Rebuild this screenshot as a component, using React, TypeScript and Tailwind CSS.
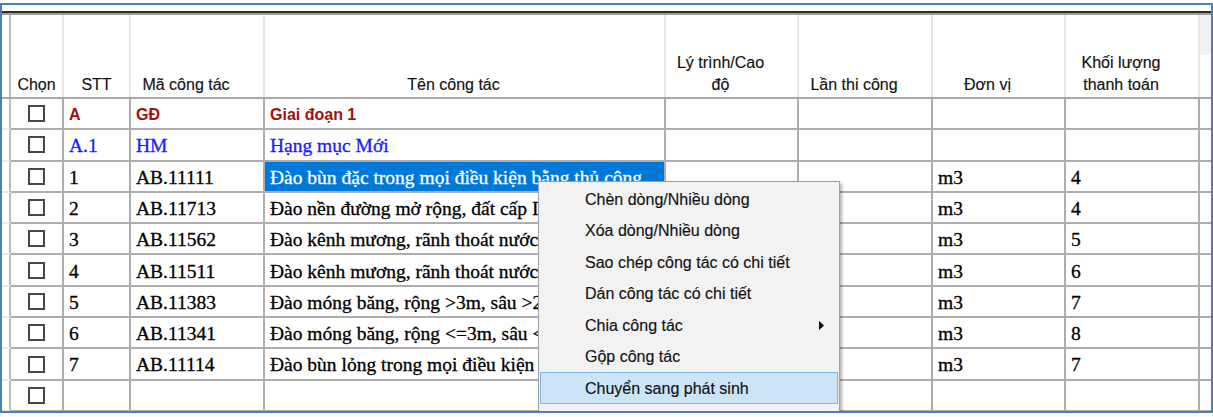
import React from "react";

const COLS =
  "grid grid-cols-[9px_53px_67px_134px_401px_133px_134px_133px_134px_11px]";

type Row = {
  kind: "red" | "blue" | "normal" | "empty";
  stt?: string;
  ma?: string;
  ten?: string;
  dv?: string;
  kl?: string;
  selected?: boolean;
};

const rows: Row[] = [
  { kind: "red", stt: "A", ma: "GĐ", ten: "Giai đoạn 1" },
  { kind: "blue", stt: "A.1", ma: "HM", ten: "Hạng mục Mới" },
  {
    kind: "normal",
    stt: "1",
    ma: "AB.11111",
    ten: "Đào bùn đặc trong mọi điều kiện bằng thủ công",
    dv: "m3",
    kl: "4",
    selected: true,
  },
  { kind: "normal", stt: "2", ma: "AB.11713", ten: "Đào nền đường mở rộng, đất cấp I", dv: "m3", kl: "4" },
  { kind: "normal", stt: "3", ma: "AB.11562", ten: "Đào kênh mương, rãnh thoát nước, rộng <=6m, đất cấp I", dv: "m3", kl: "5" },
  { kind: "normal", stt: "4", ma: "AB.11511", ten: "Đào kênh mương, rãnh thoát nước, rộng <=3m, đất cấp I", dv: "m3", kl: "6" },
  { kind: "normal", stt: "5", ma: "AB.11383", ten: "Đào móng băng, rộng >3m, sâu >2m, đất cấp I", dv: "m3", kl: "7" },
  { kind: "normal", stt: "6", ma: "AB.11341", ten: "Đào móng băng, rộng <=3m, sâu <=2m, đất cấp I", dv: "m3", kl: "8" },
  { kind: "normal", stt: "7", ma: "AB.11114", ten: "Đào bùn lỏng trong mọi điều kiện", dv: "m3", kl: "7" },
  { kind: "empty" },
];

const menuItems = [
  { label: "Chèn dòng/Nhiều dòng" },
  { label: "Xóa dòng/Nhiều dòng" },
  { label: "Sao chép công tác có chi tiết" },
  { label: "Dán công tác có chi tiết" },
  { label: "Chia công tác", sub: true },
  { label: "Gộp công tác" },
  { label: "Chuyển sang phát sinh", hl: true },
];

function HeadCell({
  children,
  offset,
}: {
  children?: React.ReactNode;
  offset?: boolean;
}) {
  return (
    <div
      className={`flex items-end justify-center border-r-2 border-[#e6e6e6] pb-[1px] text-center text-[16px] leading-[22px] text-[#111] [-webkit-text-stroke:0.15px] ${
        offset ? "pr-[22px]" : ""
      }`}
    >
      <div>{children}</div>
    </div>
  );
}

function Checkbox() {
  return <div className="h-[17px] w-[17px] border-2 border-[#474747] bg-white" />;
}

function Cell({
  children,
  className = "",
}: {
  children?: React.ReactNode;
  className?: string;
}) {
  return (
    <div
      className={`flex items-center overflow-hidden whitespace-nowrap border-b-2 border-r-2 border-[#adadad] pl-[5px] pt-[2px] ${className}`}
    >
      {children}
    </div>
  );
}

function BodyRow({ r }: { r: Row }) {
  const serif =
    "font-['Liberation_Serif','Times_New_Roman',serif] text-[19.5px] [-webkit-text-stroke:0.3px]";
  const red = "font-['Liberation_Sans',Arial,sans-serif] text-[16px] font-bold text-[#a01010]";
  const blue = `${serif} text-[#1a1aff]`;
  const normal = `${serif} text-black`;
  const txt = r.kind === "red" ? red : r.kind === "blue" ? blue : normal;
  return (
    <div className={`${COLS} h-[31.3px]`}>
      <div className="border-b-2 border-r-2 border-b-[#e8e8e8] border-r-[#bdbdbd]" />
      <div className="flex items-center justify-center border-b-2 border-r-2 border-[#adadad]">
        <Checkbox />
      </div>
      <Cell className={txt}>{r.stt}</Cell>
      <Cell className={txt}>{r.ma}</Cell>
      <Cell className={`${txt} ${r.selected ? "bg-[#0078d7] !text-white" : ""}`}>{r.ten}</Cell>
      <Cell />
      <Cell />
      <Cell className={txt}>{r.dv}</Cell>
      <Cell className={txt}>{r.kl}</Cell>
      <div className="border-b-2 border-[#adadad]" />
    </div>
  );
}

function ContextMenu() {
  return (
    <div className="absolute left-[536px] top-[176px] h-[260px] w-[302px] border border-[#a0a0a0] bg-[#f2f2f2] p-[1px] shadow-[2px_2px_3px_rgba(0,0,0,0.3)]">
      {menuItems.map((it) => (
        <div
          key={it.label}
          className={`flex h-[31.5px] items-center justify-between border pl-[44px] pr-[13px] pt-[2px] text-[16px] text-[#111] [-webkit-text-stroke:0.15px] ${
            it.hl ? "border-[#7eb4ea] bg-[#cce4f7]" : "border-transparent"
          }`}
        >
          <span>{it.label}</span>
          {it.sub ? (
            <svg width="5" height="9" viewBox="0 0 5 9">
              <polygon points="0,0 5,4.5 0,9" fill="#000" />
            </svg>
          ) : null}
        </div>
      ))}
    </div>
  );
}

export default function App() {
  return (
    <div className="h-[417px] w-[1213px] bg-white pt-[3px] font-['Liberation_Sans',Arial,sans-serif]">
      <div className="relative h-[410px] overflow-hidden border-2 border-[#4a7ebf] bg-white">
        <div className="h-[6px]" />
        <div className="h-[2px] bg-[#2e2e2e]" />
        <div className="h-[2px] bg-[#9e9e9e]" />
        <div className={`${COLS} h-[84px] border-b-2 border-[#a8a8a8]`}>
          <div className="border-r-2 border-[#bdbdbd]" />
          <HeadCell>Chọn</HeadCell>
          <HeadCell>STT</HeadCell>
          <HeadCell offset>Mã công tác</HeadCell>
          <HeadCell offset>Tên công tác</HeadCell>
          <HeadCell offset>
            Lý trình/Cao
            <br />
            độ
          </HeadCell>
          <HeadCell offset>Lần thi công</HeadCell>
          <HeadCell offset>Đơn vị</HeadCell>
          <HeadCell offset>
            Khối lượng
            <br />
            thanh toán
          </HeadCell>
          <div>
            <div className="h-[40px] bg-[#f0f0f0]" />
          </div>
        </div>
        {rows.map((r, i) => (
          <BodyRow key={i} r={r} />
        ))}
        <ContextMenu />
      </div>
    </div>
  );
}
